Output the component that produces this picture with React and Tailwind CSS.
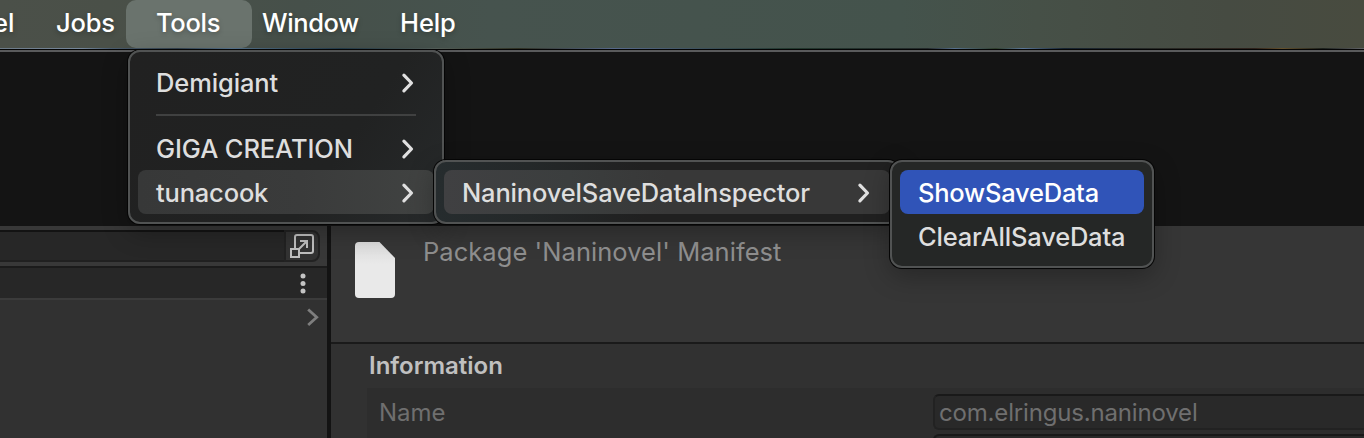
import React from "react";

const uiFont = "font-['Inter','Liberation_Sans',sans-serif]";

function Chevron() {
  return (
    <svg width="14" height="22" viewBox="0 0 14 22" fill="none" className="mt-0.5 shrink-0">
      <path d="M2.9 3.2 L10.5 11 L2.9 18.8" stroke="#e0e0e0" strokeWidth="3.2" strokeLinecap="round" strokeLinejoin="round" />
    </svg>
  );
}

function Menu({ className, children }) {
  return (
    <div className={`absolute rounded-xl border-2 border-[#515353] p-2 shadow-[0_0_0_1px_#050505,0_8px_26px_rgba(0,0,0,0.28)] ${className}`}>
      {children}
    </div>
  );
}

function MenuRow({ label, track = "", arrow, className = "text-[#dedede]" }) {
  return (
    <div className={`flex h-11 items-center justify-between rounded-lg pl-[18px] pr-[19px] ${className}`}>
      <span className={`mt-0.5 whitespace-nowrap ${track}`}>{label}</span>
      {arrow && <Chevron />}
    </div>
  );
}

function MenuBar() {
  return (
    <div className="flex h-12 shrink-0 items-center bg-[linear-gradient(90deg,#4b5049_0%,#4a5048_8%,#46504a_22%,#46534e_36%,#44534c_66%,#465047_76%,#464b42_90%,#484b3f_100%)] text-[25.5px] font-medium text-white [text-shadow:0_2px_5px_rgba(0,0,0,0.25)]">
      <div className="flex w-[56px] items-center">
        <span className="-ml-[7px] -mt-0.5">el</span>
      </div>
      <span className="-mt-0.5 w-[70px] tracking-[-0.2px]">Jobs</span>
      <div className="flex h-12 w-[126px] items-center rounded-[10px] bg-[#6a736d] pl-[30px]">
        <span className="-mt-0.5 tracking-[-0.3px]">Tools</span>
      </div>
      <span className="-mt-0.5 ml-2.5 w-[138px] tracking-[-0.4px]">Window</span>
      <span className="-mt-0.5 tracking-[-0.1px]">Help</span>
    </div>
  );
}

function LeftPanel() {
  return (
    <div className="flex w-[327px] shrink-0 flex-col bg-[#313131]">
      <div className="flex h-10 bg-[#383838] pt-1">
        <div className="h-8 w-[284px] border-y-2 border-t-[#131313] border-b-[#202020] bg-[#272727]" />
        <div className="flex h-8 w-9 items-center justify-center rounded-r-lg border-2 border-[#222222] bg-[#333333]">
          <svg width="26" height="26" viewBox="0 0 26 26" fill="none" stroke="#c0c0c0" strokeWidth="2">
            <path d="M6 15 V4 Q6 2 8 2 H22 Q24 2 24 4 V18 Q24 20 22 20 H11" />
            <rect x="2" y="16" width="8" height="8" />
            <path d="M9.5 16.5 L18 8 M11 8 H18 V15" />
          </svg>
        </div>
      </div>
      <div className="flex h-[34px] items-center justify-end border-b-2 border-t-2 border-b-[#3b3b3b] border-t-[#1b1b1b] bg-[#272727] pr-[21px]">
        <svg width="6" height="22" viewBox="0 0 6 22" fill="#c4c4c4" className="mt-0.5">
          <circle cx="3" cy="3" r="2.5" />
          <circle cx="3" cy="10.5" r="2.5" />
          <circle cx="3" cy="18" r="2.5" />
        </svg>
      </div>
      <div className="flex justify-end pr-[7px] pt-2">
        <svg width="13" height="19" viewBox="0 0 13 19" fill="none" stroke="#7e7e7e" strokeWidth="2.8">
          <path d="M1.2 1.5 L9.7 9.3 L1.2 17" />
        </svg>
      </div>
    </div>
  );
}

function Inspector() {
  return (
    <div className="flex min-w-0 grow flex-col bg-[#313131]">
      <div className="flex h-[118px] shrink-0 border-b-2 border-[#1a1a1a] bg-[#363636] pl-6 pt-4">
        <svg width="40" height="56" viewBox="0 0 40 56" className="shrink-0">
          <defs>
            <linearGradient id="page" x1="0" y1="0" x2="0" y2="1">
              <stop offset="0" stopColor="#dcdcdc" />
              <stop offset="0.4" stopColor="#e9e9e9" />
            </linearGradient>
          </defs>
          <path d="M4 0 H24.5 L40 16 V52 Q40 56 36 56 H4 Q0 56 0 52 V4 Q0 0 4 0 Z" fill="url(#page)" />
        </svg>
        <span className="ml-7 -mt-1.5 h-8 whitespace-nowrap text-[25.5px] leading-8 tracking-[0.05px] text-[#8f8f8f]">Package 'Naninovel' Manifest</span>
      </div>
      <div className="flex h-11 shrink-0 items-center pl-[38px] text-[24px] font-semibold text-[#c0c0c0]">
        <span>Information</span>
      </div>
      <div className="ml-9 flex h-[50px] shrink-0 overflow-hidden bg-[#2d2d2d] pl-3 pt-1.5 text-[24px] text-[#6f6f6f]">
        <span className="w-[554px] leading-[38px]">Name</span>
        <div className="flex grow flex-col gap-1">
          <div className="h-9 shrink-0 rounded-l-md border-2 border-r-0 border-[#222222] border-t-[#191919] bg-[#292929] pl-1 leading-[34px] tracking-[-0.17px]">com.elringus.naninovel</div>
          <div className="h-9 shrink-0 rounded-l-md border-2 border-r-0 border-[#191919] bg-[#292929]" />
        </div>
      </div>
    </div>
  );
}

export default function App() {
  return (
    <div className={`relative flex h-[438px] w-[1364px] flex-col overflow-hidden bg-[#141414] ${uiFont}`}>
      <MenuBar />
      <div className="h-px shrink-0 bg-[linear-gradient(90deg,#6c7a88_0%,#75869a_6%,#4b5d70_8%,#33424e_13%,#587690_17%,#243d4c_25%,#55605a_32%,#2e3022_38%,#56688a_45%,#22382e_58%,#23292a_68%,#56708e_70%,#303f2c_73%,#5a7697_75%,#162330_78%,#272925_85%,#2d211b_92%,#65512c_94%,#1c211d_97%,#636569_100%)]" />
      <div className="h-px shrink-0 bg-[#050505]" />
      <div className="h-0.5 shrink-0 bg-[#5a5b5c]" />
      <div className="h-[174px] shrink-0" />
      <div className="flex grow">
        <LeftPanel />
        <div className="w-1 shrink-0 bg-[#131313]" />
        <Inspector />
      </div>

      <div className="text-[25.5px] font-[450]">
        <Menu className="left-[128px] top-[50px] h-[174px] w-[316px] bg-[linear-gradient(125deg,#212121_0%,#212222_65%,#272a2b_100%)]">
          <MenuRow label="Demigiant" track="tracking-[-0.12px]" arrow />
          <div className="flex h-[22px] items-center px-[18px]">
            <div className="h-0.5 grow bg-[#404141]" />
          </div>
          <MenuRow label="GIGA CREATION" track="tracking-[-0.1px]" arrow />
          <MenuRow label="tunacook" track="tracking-[-0.18px]" arrow className="bg-[linear-gradient(90deg,#373838,#3a3b3b_55%,#414342)] text-[#dedede]" />
        </Menu>
        <Menu className="left-[434px] top-[160px] h-16 w-[466px] bg-[linear-gradient(90deg,#262c2e_0%,#242829_20%,#202020_45%)]">
          <MenuRow label="NaninovelSaveDataInspector" track="tracking-[-0.17px]" arrow className="bg-[linear-gradient(90deg,#404042,#3b3e3e_28%,#383838_50%)] text-[#dedede]" />
        </Menu>
        <Menu className="left-[890px] top-[160px] h-[108px] w-[264px] bg-[#252726]">
          <MenuRow label="ShowSaveData" track="tracking-[-0.24px]" className="bg-[#3054b8] text-white" />
          <MenuRow label="ClearAllSaveData" track="tracking-[-0.2px]" />
        </Menu>
      </div>
    </div>
  );
}
